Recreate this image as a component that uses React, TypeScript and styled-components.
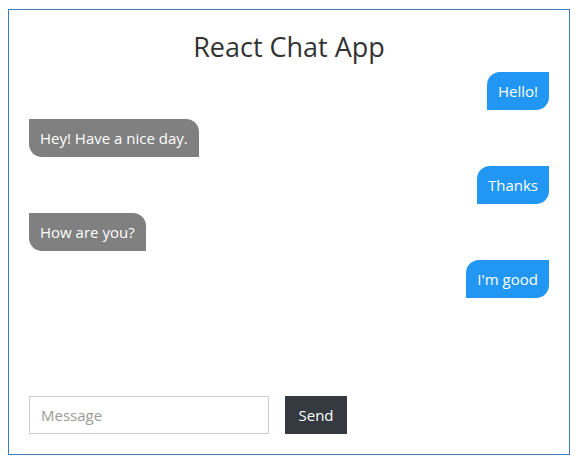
import React from "react";
import styled, { createGlobalStyle } from "styled-components";

const Global = createGlobalStyle`
  body {
    margin: 8px;
    background: #ffffff;
    font-family: "Open Sans", "Noto Sans", sans-serif;
  }
  * { box-sizing: border-box; }
`;

const Frame = styled.div`
  margin-top: 1px;
  width: 562px;
  height: 446px;
  border: 1px solid #4279b8;
  padding: 20px;
  display: flex;
  flex-direction: column;
`;

const Title = styled.h1`
  margin: 0;
  font-size: 27px;
  line-height: 33px;
  font-weight: 400;
  color: #333333;
  text-align: center;
`;

const MessageList = styled.div`
  flex: 1;
  margin-top: 9px;
  display: flex;
  flex-direction: column;
  gap: 9px;
`;

const Bubble = styled.div<{ $mine: boolean }>`
  align-self: ${(p) => (p.$mine ? "flex-end" : "flex-start")};
  background: ${(p) => (p.$mine ? "#2196f3" : "#808080")};
  color: #ffffff;
  font-size: 15px;
  font-weight: 500;
  line-height: 18px;
  padding: 10px 11px;
  border-radius: ${(p) => (p.$mine ? "13px 0 13px 0" : "0 13px 0 13px")};
`;

const Form = styled.form`
  display: flex;
  gap: 16px;
  margin: 0;
`;

const Input = styled.input`
  width: 240px;
  height: 38px;
  border: 1px solid #cccccc;
  padding: 0 11px;
  font-family: "Open Sans", "Noto Sans", sans-serif;
  font-size: 15px;
  color: #333;
  outline: none;
  &::placeholder {
    color: #9a9a9a;
  }
`;

const SendButton = styled.button`
  width: 62px;
  height: 38px;
  border: none;
  background: #343a40;
  color: #ffffff;
  font-family: "Open Sans", "Noto Sans", sans-serif;
  font-size: 15px;
  font-weight: 500;
  padding: 0;
`;

const messages = [
  { text: "Hello!", mine: true },
  { text: "Hey! Have a nice day.", mine: false },
  { text: "Thanks", mine: true },
  { text: "How are you?", mine: false },
  { text: "I'm good", mine: true },
];

export default function App() {
  return (
    <>
      <Global />
      <Frame>
        <Title>React Chat App</Title>
        <MessageList>
          {messages.map((m, i) => (
            <Bubble key={i} $mine={m.mine}>
              {m.text}
            </Bubble>
          ))}
        </MessageList>
        <Form onSubmit={(e) => e.preventDefault()}>
          <Input placeholder="Message" />
          <SendButton type="submit">Send</SendButton>
        </Form>
      </Frame>
    </>
  );
}
